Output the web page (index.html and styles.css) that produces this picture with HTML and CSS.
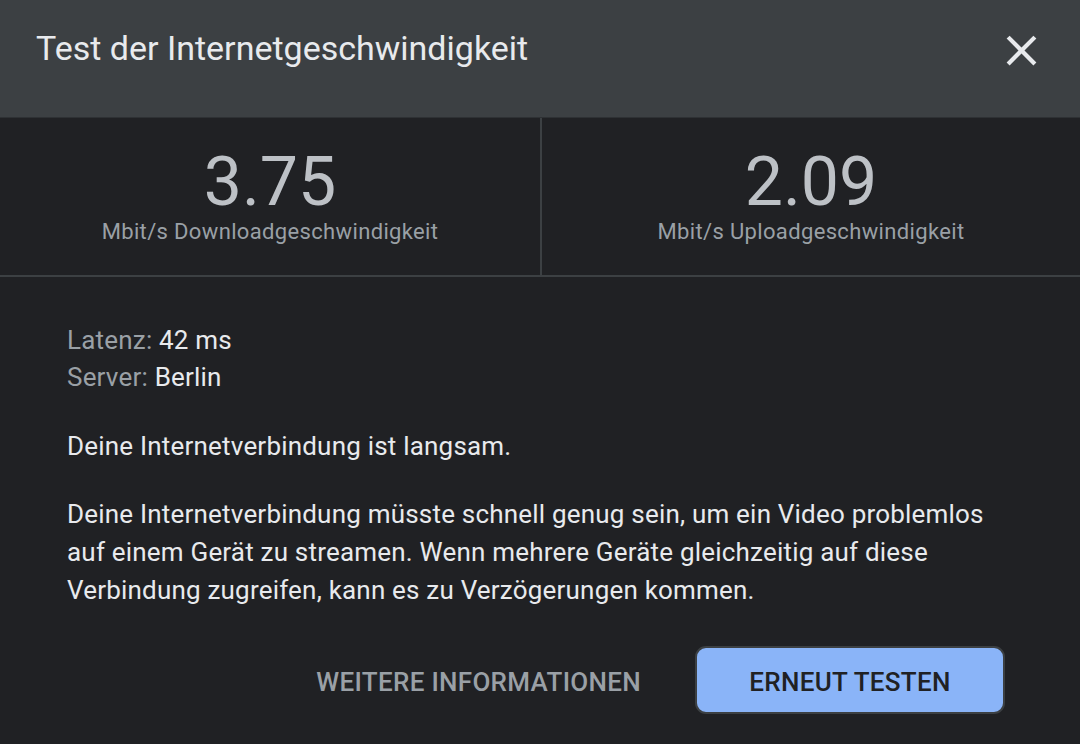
FILE: index.html
```html
<!DOCTYPE html>
<html lang="de">
<head>
<meta charset="utf-8">
<title>Test der Internetgeschwindigkeit</title>
<link rel="stylesheet" href="styles.css">
</head>
<body>
<div class="dialog">
  <header class="header">
    <h1 class="title">Test der Internetgeschwindigkeit</h1>
    <button class="close" aria-label="Schließen">
      <svg width="51" height="51" viewBox="0 0 24 24"><path d="M19 6.41 17.59 5 12 10.59 6.41 5 5 6.41 10.59 12 5 17.59 6.41 19 12 13.41 17.59 19 19 17.59 13.41 12z" fill="#e8eaed"/></svg>
    </button>
  </header>
  <section class="stats">
    <div class="stat">
      <div class="value">3.75</div>
      <div class="label">Mbit/s Downloadgeschwindigkeit</div>
    </div>
    <div class="stat">
      <div class="value">2.09</div>
      <div class="label">Mbit/s Uploadgeschwindigkeit</div>
    </div>
  </section>
  <section class="body">
    <div class="meta">
      <div><span class="key">Latenz:</span> 42 ms</div>
      <div><span class="key">Server:</span> Berlin</div>
    </div>
    <p class="text">Deine Internetverbindung ist langsam.</p>
    <p class="text">Deine Internetverbindung müsste schnell genug sein, um ein Video problemlos auf einem Gerät zu streamen. Wenn mehrere Geräte gleichzeitig auf diese Verbindung zugreifen, kann es zu Verzögerungen kommen.</p>
    <div class="actions">
      <button class="btn-text">WEITERE INFORMATIONEN</button>
      <button class="btn-primary">ERNEUT TESTEN</button>
    </div>
  </section>
</div>
</body>
</html>
```
FILE: styles.css
```css
html, body {
  margin: 0;
  padding: 0;
  background: #202124;
}
body {
  font-family: Roboto, "Noto Sans", sans-serif;
  width: 1080px;
  height: 744px;
  overflow: hidden;
}
.dialog {
  display: flex;
  flex-direction: column;
}
.header {
  height: 118px;
  background: #3c4043;
  border-bottom: 1px solid #2e3134;
  display: flex;
  align-items: flex-start;
  justify-content: space-between;
  padding: 0 33px 0 36px;
  box-sizing: border-box;
}
.title {
  margin: 0;
  padding-top: 27px;
  font-size: 34px;
  font-weight: 400;
  color: #e8eaed;
  line-height: 42px;
  letter-spacing: 0;
}
.close {
  margin-top: 25px;
  background: none;
  border: 0;
  padding: 0;
  width: 51px;
  height: 51px;
  display: flex;
}
.stats {
  display: grid;
  grid-template-columns: 540px 1fr;
  height: 159px;
  border-bottom: 2px solid #3c4043;
  box-sizing: border-box;
}
.stat {
  display: flex;
  flex-direction: column;
  align-items: center;
  padding-top: 27px;
}
.stat + .stat {
  border-left: 2px solid #3c4043;
}
.value {
  font-size: 68px;
  line-height: 74px;
  color: #bdc1c6;
}
.label {
  font-size: 22px;
  line-height: 26px;
  letter-spacing: 0.35px;
  color: #9aa0a6;
}
.body {
  padding: 45px 67px 0 67px;
}
.meta {
  font-size: 26px;
  line-height: 37px;
  letter-spacing: 0.2px;
  color: #e8eaed;
}
.key {
  color: #9aa0a6;
}
.text {
  margin: 31px 0 0 0;
  font-size: 26px;
  line-height: 38px;
  letter-spacing: 0.2px;
  color: #e8eaed;
}
.text + .text {
  margin-top: 30px;
}
.actions {
  display: flex;
  justify-content: flex-end;
  align-items: center;
  gap: 54px;
  margin-top: 37px;
  margin-right: 8px;
}
.btn-text {
  background: none;
  border: 0;
  padding: 4px 0 0 0;
  font-family: inherit;
  font-size: 26px;
  font-weight: 500;
  color: #9aa0a6;
  letter-spacing: 0.3px;
}
.btn-primary {
  width: 310px;
  height: 68px;
  padding: 4px 0 0 0;
  background: #8ab4f8;
  border: 2px solid #3c4043;
  border-radius: 11px;
  font-family: inherit;
  font-size: 26px;
  font-weight: 500;
  color: #202124;
  letter-spacing: 0.3px;
}
```
